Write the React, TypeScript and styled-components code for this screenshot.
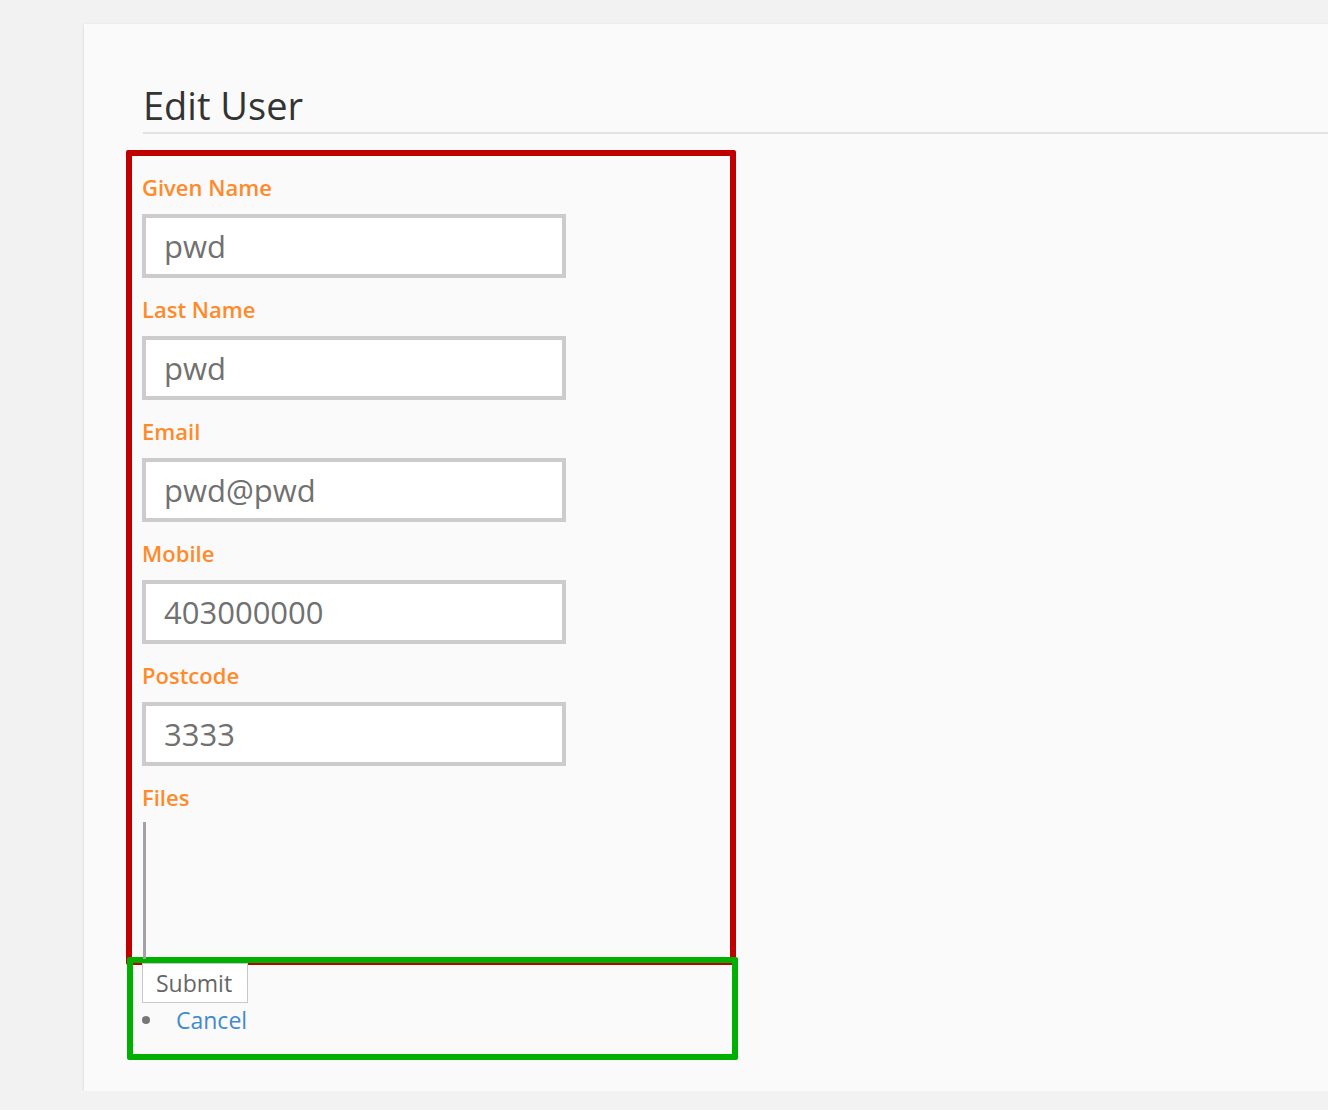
import React from 'react';
import styled, { createGlobalStyle } from 'styled-components';

const GlobalStyle = createGlobalStyle`
  html, body {
    margin: 0;
    padding: 0;
    background: #f2f2f2;
    font-family: "Open Sans", "Liberation Sans", sans-serif;
    overflow: hidden;
  }
`;

const Page = styled.div({
  paddingTop: "24px",
  paddingLeft: "84px",
});

const Card = styled.div({
  background: "#fafafa",
  boxShadow: "0 1px 3px rgba(0,0,0,0.12)",
  padding: "60px 0 31px 59px",
  marginRight: "-20px",
});

const Title = styled.h1({
  margin: "0 0 16px 0",
  fontSize: "38px",
  lineHeight: "42px",
  fontWeight: 400,
  color: "#333",
  paddingBottom: "6px",
  borderBottom: "2px solid #e2e2e2",
});

const FieldsFrame = styled.div({
  boxSizing: "border-box",
  width: "610px",
  marginLeft: "-17px",
  border: "6px solid #c00000",
  borderRadius: "2px",
  padding: "16px 0 0 10px",
});

const Field = styled.div({
  display: "flex",
  flexDirection: "column",
  alignItems: "flex-start",
  "& + &": {
    marginTop: "16px",
  },
});

const Label = styled.label({
  fontSize: "22px",
  lineHeight: "30px",
  fontWeight: 600,
  color: "#ff8a2b",
  marginBottom: "12px",
});

const Input = styled.input({
  boxSizing: "border-box",
  width: "424px",
  height: "64px",
  border: "4px solid #cccccc",
  background: "#fff",
  padding: "0 18px",
  fontFamily: "'Open Sans', 'Liberation Sans', sans-serif",
  fontSize: "31px",
  color: "#717171",
  outline: "none",
});

const FilesLabel = styled(Label)({
  marginBottom: "10px",
});

const FilesBox = styled.div({
  width: "0",
  height: "137px",
  borderLeft: "3px solid #a3a3a3",
  marginLeft: "1px",
});

const ActionsFrame = styled.div({
  boxSizing: "border-box",
  width: "611px",
  marginLeft: "-16px",
  marginTop: "-8px",
  border: "6px solid #00b000",
  borderRadius: "2px",
  padding: "0 0 17px 9px",
});

const SubmitButton = styled.button({
  display: "block",
  fontFamily: "'Open Sans', 'Liberation Sans', sans-serif",
  fontSize: "23px",
  lineHeight: "30px",
  color: "#666",
  background: "#fff",
  border: "1px solid #c8c8c8",
  padding: "4px 15px 4px 13px",
  margin: "0",
});

const LinkList = styled.ul({
  listStyle: "none",
  margin: "0",
  padding: "0",
});

const LinkItem = styled.li({
  display: "flex",
  alignItems: "center",
  fontSize: "23px",
  lineHeight: "34px",
  gap: "26px",
  "&::before": {
    content: '""',
    width: "8px",
    height: "8px",
    borderRadius: "50%",
    background: "#777",
  },
});

const CancelLink = styled.a({
  color: "#428bca",
  textDecoration: "none",
});

const fields = [
  { label: "Given Name", value: "pwd" },
  { label: "Last Name", value: "pwd" },
  { label: "Email", value: "pwd@pwd" },
  { label: "Mobile", value: "403000000" },
  { label: "Postcode", value: "3333" },
];

function App() {
  return (
    <>
      <GlobalStyle />
      <Page>
        <Card>
          <Title>Edit User</Title>
          <FieldsFrame>
            {fields.map((f) => (
              <Field key={f.label}>
                <Label>{f.label}</Label>
                <Input defaultValue={f.value} />
              </Field>
            ))}
            <Field>
              <FilesLabel>Files</FilesLabel>
              <FilesBox />
            </Field>
          </FieldsFrame>
          <ActionsFrame>
            <SubmitButton>Submit</SubmitButton>
            <LinkList>
              <LinkItem>
                <CancelLink href="#">Cancel</CancelLink>
              </LinkItem>
            </LinkList>
          </ActionsFrame>
        </Card>
      </Page>
    </>
  );
}

export default App;
